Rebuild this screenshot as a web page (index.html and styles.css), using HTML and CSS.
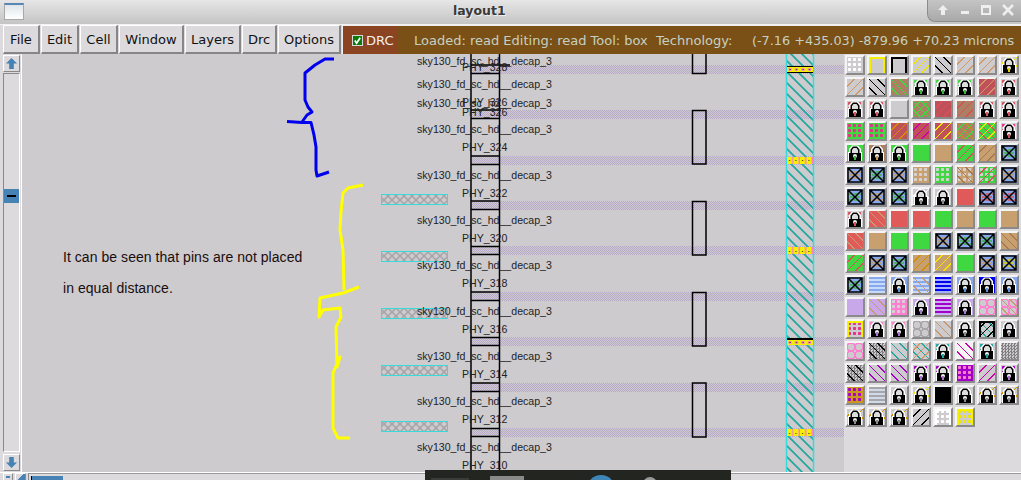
FILE: index.html
```html
<!DOCTYPE html>
<html lang="en">
<head>
<meta charset="utf-8">
<title>layout1</title>
<link rel="stylesheet" href="styles.css">
</head>
<body>
<svg class="defs" width="0" height="0" aria-hidden="true">
  <defs>
    <symbol id="lk" viewBox="0 0 16 16">
      <path d="M1 16V7h1V4l3-3.500h6l3 3.500v3h1v9z" fill="#fff"/>
      <path d="M2 16V8h1.500V4.500L6 1.500h4l2.500 3V8H14v8z" fill="#000"/>
      <path d="M5 8V5l1.500-2h3L11 5v3z" fill="#ddd"/>
      <circle cx="8" cy="11" r="2" fill="#eee"/>
      <rect x="7" y="11" width="2" height="4" fill="currentColor"/>
    </symbol>
    <symbol id="xb" viewBox="0 0 16 16">
      <path d="M1 5h14M1 11h14M3 8h10" stroke="currentColor" stroke-width="1.500" stroke-dasharray="4 2"/>
      <path d="M1 1h14v14H1zM1 1l14 14M15 1L1 15" fill="none" stroke="#000" stroke-width="1.500"/>
    </symbol>
  </defs>
</svg>

<header class="title">
  <span class="win-icon"></span>
  <span class="title-text">layout1</span>
  <div class="win-btns">
    <svg class="wb" viewBox="0 0 12 12"><path d="M6 1l5 5H8v5H4V6H1z"/></svg>
    <svg class="wb" viewBox="0 0 12 12"><path d="M2 7h8v3H2z"/></svg>
    <svg class="wb" viewBox="0 0 12 12"><path d="M1 1h10v10H1zM3 4v5h6V4z" fill-rule="evenodd"/></svg>
    <svg class="wb" viewBox="0 0 12 12"><path d="M1 1l10 10M11 1L1 11" stroke="#eee" stroke-width="2.500"/></svg>
  </div>
</header>

<nav class="menu">
  <button class="mb w-file">File</button>
  <button class="mb w-edit">Edit</button>
  <button class="mb w-cell">Cell</button>
  <button class="mb w-window">Window</button>
  <button class="mb w-layers">Layers</button>
  <button class="mb w-drc">Drc</button>
  <button class="mb w-options">Options</button>
  <div class="drc"><span class="check"><svg viewBox="0 0 10 10"><path d="M2 5l2 3 4-6" fill="none" stroke="#fff" stroke-width="2"/></svg></span>DRC</div>
  <div class="status">
    <span class="st-left">Loaded: read Editing: read Tool: box&nbsp; Technology:</span>
    <span class="st-right">(-7.16 +435.03) -879.96 +70.23 microns</span>
  </div>
</nav>

<main class="main">
  <aside class="vscroll">
    <button class="sb-btn"><svg viewBox="0 0 14 14"><path d="M7 1l6 6H9.500v6h-5V7H1z"/></svg></button>
    <div class="trough">
      <div class="thumb"><span></span></div>
    </div>
    <button class="sb-btn"><svg viewBox="0 0 14 14"><path d="M7 13l6-6H9.500V1h-5v6H1z"/></svg></button>
  </aside>

  <svg class="canvas" viewBox="22 54 822 418" width="822" height="418" xmlns="http://www.w3.org/2000/svg">
    <defs>
      <pattern id="dither" width="2" height="2" patternUnits="userSpaceOnUse">
        <rect width="2" height="2" fill="#cdcbce"/>
        <rect width="1" height="1" fill="#b8a8ca"/>
        <rect x="1" y="1" width="1" height="1" fill="#b8a8ca"/>
      </pattern>
      <pattern id="teal" width="11" height="11" patternUnits="userSpaceOnUse">
        <path d="M-2 -2L13 13M-2 9L2 13M9 -2L13 2" stroke="#22a8a0" stroke-width="1.800"/>
      </pattern>
      <pattern id="mesh" width="8" height="8" patternUnits="userSpaceOnUse">
        <path d="M0 0L8 8M8 0L0 8" stroke="#a5a3a6" stroke-width="1.500"/>
      </pattern>
      <pattern id="cy" x="787" y="66" width="6.500" height="7" patternUnits="userSpaceOnUse">
        <rect width="6.500" height="7" fill="#f4f000"/>
        <path d="M0 .5h6.500M0 6.500h6.500" stroke="#000" stroke-width="1"/>
        <rect x="1.500" y="2" width="3" height="3" fill="#ff80d0"/>
        <rect x="2.500" y="3" width="1" height="1" fill="#111"/>
      </pattern>
      <pattern id="cp" x="787" y="157" width="6.500" height="7" patternUnits="userSpaceOnUse">
        <rect width="6.500" height="7" fill="#f4f000"/>
        <rect x="5" width="1.500" height="7" fill="#ff80d0"/>
        <rect x="2" y="3" width="1" height="1" fill="#222"/>
      </pattern>
    </defs>

    <g class="stripes">
      <rect x="472" y="65" width="372" height="9"/>
      <rect x="472" y="110" width="372" height="9"/>
      <rect x="472" y="156" width="372" height="9"/>
      <rect x="472" y="201" width="372" height="9"/>
      <rect x="472" y="246" width="372" height="9"/>
      <rect x="472" y="292" width="372" height="9"/>
      <rect x="472" y="337" width="372" height="9"/>
      <rect x="472" y="383" width="372" height="9"/>
      <rect x="472" y="428" width="372" height="9"/>
    </g>

    <rect class="rail" x="786.500" y="50" width="27" height="426"/>
    <rect class="cy" x="787" y="66" width="26" height="7"/>
    <rect class="cp" x="787" y="157" width="26" height="7"/>
    <rect class="cp" x="787" y="247" width="26" height="7"/>
    <rect class="cy" x="787" y="338" width="26" height="7"/>
    <rect class="cp" x="787" y="429" width="26" height="7"/>

    <g class="pins">
      <rect x="381.500" y="194.500" width="66" height="10"/>
      <rect x="381.500" y="251.500" width="66" height="10"/>
      <rect x="381.500" y="308.500" width="66" height="10"/>
      <rect x="381.500" y="365.500" width="66" height="10"/>
      <rect x="381.500" y="421.500" width="66" height="10"/>
    </g>

    <g class="bars">
      <path d="M471 50V476M499.500 50V476"/>
      <path d="M471 65H510M471 73.500H499.500M471 110H499.500M471 118.500H499.500M471 156H499.500M471 164.500H499.500M471 201H499.500M471 209.500H499.500M471 246.500H499.500M471 254.500H499.500M471 292H499.500M471 300.500H499.500M471 337.500H499.500M471 345.500H499.500M471 383H499.500M471 391.500H499.500M471 428.500H499.500M471 436.500H499.500"/>
      <path d="M692.500 50V73.500H706V50M692.500 110.500H706V164H692.500ZM692.500 201.500H706V255H692.500ZM692.500 292.500H706V346H692.500ZM692.500 383H706V437H692.500Z"/>
    </g>

    <g class="cell-names">
      <text x="417" y="65">sky130_fd_sc_hd__decap_3</text>
      <text x="417" y="88">sky130_fd_sc_hd__decap_3</text>
      <text x="417" y="107">sky130_fd_sc_hd__decap_3</text>
      <text x="417" y="133">sky130_fd_sc_hd__decap_3</text>
      <text x="417" y="179">sky130_fd_sc_hd__decap_3</text>
      <text x="417" y="224">sky130_fd_sc_hd__decap_3</text>
      <text x="417" y="269">sky130_fd_sc_hd__decap_3</text>
      <text x="417" y="315">sky130_fd_sc_hd__decap_3</text>
      <text x="417" y="360">sky130_fd_sc_hd__decap_3</text>
      <text x="417" y="405">sky130_fd_sc_hd__decap_3</text>
      <text x="417" y="451">sky130_fd_sc_hd__decap_3</text>
      <text x="462" y="71">PHY_328</text>
      <text x="462" y="106">PHY_326</text>
      <text x="462" y="116">PHY_326</text>
      <text x="462" y="151">PHY_324</text>
      <text x="462" y="197">PHY_322</text>
      <text x="462" y="242">PHY_320</text>
      <text x="462" y="287">PHY_318</text>
      <text x="462" y="333">PHY_316</text>
      <text x="462" y="378">PHY_314</text>
      <text x="462" y="423">PHY_312</text>
      <text x="462" y="469">PHY_310</text>
    </g>

    <g class="note">
      <text x="63" y="262">It can be seen that pins are not placed</text>
      <text x="63" y="293">in equal distance.</text>
    </g>

    <path class="ink blue" d="M334 59H325L315 65L305 73V100L308 107L312 112L307 115L302 122M287 121.500L302 122.500H311L314 135L316 147V170L317 176L323 174L329 172"/>
    <path class="ink yellow" d="M363 185L348 188L343 193L341 212L340 230L343 250L344 290M359 287L343 293L320 298L319 317L323 310L340 308L341 317L336 327L337 367L340 357L333 373V428L338 438H350"/>
  </svg>

  <section class="layers">
    <i class="t dot c-w"></i>
    <i class="t box-y"></i>
    <i class="t box-k"></i>
    <i class="t dg a-y"></i>
    <i class="t db b-k"></i>
    <i class="t dg a-t"></i>
    <i class="t dg a-t"></i>
    <i class="t dg a-y ky"><svg><use href="#lk"/></svg></i>

    <i class="t dg a-t"></i>
    <i class="t db b-k"></i>
    <i class="t f-brn db b-g"></i>
    <i class="t dot c-g kg"><svg><use href="#lk"/></svg></i>
    <i class="t dot c-g kg"><svg><use href="#lk"/></svg></i>
    <i class="t dot c-g kg"><svg><use href="#lk"/></svg></i>
    <i class="t f-ros dg a-t"></i>
    <i class="t dot c-r kr"><svg><use href="#lk"/></svg></i>

    <i class="t dot c-r kr"><svg><use href="#lk"/></svg></i>
    <i class="t dot c-r kr"><svg><use href="#lk"/></svg></i>
    <i class="t"></i>
    <i class="t f-brn dg a-g db b-g"></i>
    <i class="t f-ros dg a-r"></i>
    <i class="t f-brn dg a-r"></i>
    <i class="t dot c-r kr"><svg><use href="#lk"/></svg></i>
    <i class="t dot c-r kr"><svg><use href="#lk"/></svg></i>

    <i class="t f-grn dot c-m"></i>
    <i class="t f-grn dot c-m"></i>
    <i class="t f-ros dg a-o"></i>
    <i class="t f-ros dg a-m"></i>
    <i class="t f-ros dg a-y"></i>
    <i class="t f-brn dg a-g db b-o"></i>
    <i class="t f-grn dg a-y db b-r"></i>
    <i class="t dot c-m kr"><svg><use href="#lk"/></svg></i>

    <i class="t f-grn kg"><svg><use href="#lk"/></svg></i>
    <i class="t f-brn kt"><svg><use href="#lk"/></svg></i>
    <i class="t f-grn kg"><svg><use href="#lk"/></svg></i>
    <i class="t f-grn"></i>
    <i class="t f-tan"></i>
    <i class="t f-grn dg a-r"></i>
    <i class="t f-tan dg a-br"></i>
    <i class="t f-blu kg"><svg><use href="#xb"/></svg></i>

    <i class="t f-blu kt"><svg><use href="#xb"/></svg></i>
    <i class="t f-blu kg"><svg><use href="#xb"/></svg></i>
    <i class="t f-blu kt"><svg><use href="#xb"/></svg></i>
    <i class="t f-tan dot c-gy"></i>
    <i class="t f-grn dot c-gy"></i>
    <i class="t f-tan dot c-gy db b-br"></i>
    <i class="t f-grn dot c-gy dg a-r"></i>
    <i class="t f-blu kt"><svg><use href="#xb"/></svg></i>

    <i class="t f-blu kg"><svg><use href="#xb"/></svg></i>
    <i class="t f-blu kt"><svg><use href="#xb"/></svg></i>
    <i class="t f-blu kg"><svg><use href="#xb"/></svg></i>
    <i class="t dg a-w kw"><svg><use href="#lk"/></svg></i>
    <i class="t kw"><svg><use href="#lk"/></svg></i>
    <i class="t f-red"></i>
    <i class="t f-blu kr"><svg><use href="#xb"/></svg></i>
    <i class="t f-blu kr"><svg><use href="#xb"/></svg></i>

    <i class="t dot c-r kr"><svg><use href="#lk"/></svg></i>
    <i class="t f-red db b-t"></i>
    <i class="t f-red"></i>
    <i class="t f-red"></i>
    <i class="t f-grn"></i>
    <i class="t f-tan"></i>
    <i class="t f-grn"></i>
    <i class="t f-tan"></i>

    <i class="t f-red db b-t"></i>
    <i class="t f-tan"></i>
    <i class="t f-grn"></i>
    <i class="t f-grn"></i>
    <i class="t f-blu kt"><svg><use href="#xb"/></svg></i>
    <i class="t f-blu kg"><svg><use href="#xb"/></svg></i>
    <i class="t f-blu kg"><svg><use href="#xb"/></svg></i>
    <i class="t f-tan db b-br"></i>

    <i class="t f-grn dg a-r"></i>
    <i class="t f-blu kt"><svg><use href="#xb"/></svg></i>
    <i class="t f-blu kg"><svg><use href="#xb"/></svg></i>
    <i class="t f-tan dg a-o"></i>
    <i class="t f-tan dg a-y"></i>
    <i class="t f-grn"></i>
    <i class="t f-blu kt"><svg><use href="#xb"/></svg></i>
    <i class="t f-blu ky"><svg><use href="#xb"/></svg></i>

    <i class="t f-blu kg"><svg><use href="#xb"/></svg></i>
    <i class="t f-blu wave"></i>
    <i class="t f-blu kb"><svg><use href="#lk"/></svg></i>
    <i class="t f-blu wave db b-t"></i>
    <i class="t f-deep wave"></i>
    <i class="t f-blu kb"><svg><use href="#lk"/></svg></i>
    <i class="t f-deep kb"><svg><use href="#lk"/></svg></i>
    <i class="t f-blu kb"><svg><use href="#lk"/></svg></i>

    <i class="t f-lil"></i>
    <i class="t f-lil db b-t"></i>
    <i class="t f-pnk dot c-gy"></i>
    <i class="t f-lil kp"><svg><use href="#lk"/></svg></i>
    <i class="t f-pur wave"></i>
    <i class="t f-lil kp"><svg><use href="#lk"/></svg></i>
    <i class="t rings r-p"></i>
    <i class="t rings r-p db b-t"></i>

    <i class="t dot c-m box-y"></i>
    <i class="t dot c-pk kp"><svg><use href="#lk"/></svg></i>
    <i class="t dot c-pk kp"><svg><use href="#lk"/></svg></i>
    <i class="t rings r-g"></i>
    <i class="t db b-t"></i>
    <i class="t kw"><svg><use href="#lk"/></svg></i>
    <i class="t box-k dg a-k db b-teal"></i>
    <i class="t kw"><svg><use href="#lk"/></svg></i>

    <i class="t rings r-p"></i>
    <i class="t dith db b-k"></i>
    <i class="t db b-teal"></i>
    <i class="t db b-teal dg a-t"></i>
    <i class="t dot c-teal kteal"><svg><use href="#lk"/></svg></i>
    <i class="t f-wht db b-m"></i>
    <i class="t dot c-teal kteal"><svg><use href="#lk"/></svg></i>
    <i class="t dith"></i>

    <i class="t dith db b-k"></i>
    <i class="t db b-p"></i>
    <i class="t db b-p"></i>
    <i class="t dot c-p kp"><svg><use href="#lk"/></svg></i>
    <i class="t dot c-p kp"><svg><use href="#lk"/></svg></i>
    <i class="t f-pur dot c-pk"></i>
    <i class="t dg a-m"></i>
    <i class="t dot c-p kp"><svg><use href="#lk"/></svg></i>

    <i class="t f-gold dot c-p"></i>
    <i class="t f-gy2 wave"></i>
    <i class="t kw"><svg><use href="#lk"/></svg></i>
    <i class="t dg a-y kw"><svg><use href="#lk"/></svg></i>
    <i class="t f-blk"></i>
    <i class="t kw"><svg><use href="#lk"/></svg></i>
    <i class="t dg a-o kw"><svg><use href="#lk"/></svg></i>
    <i class="t dg a-o kw"><svg><use href="#lk"/></svg></i>

    <i class="t dg a-o kw"><svg><use href="#lk"/></svg></i>
    <i class="t dg a-o kw"><svg><use href="#lk"/></svg></i>
    <i class="t dg a-o kw"><svg><use href="#lk"/></svg></i>
    <i class="t dg a-k"></i>
    <i class="t dot c-w box-w"></i>
    <i class="t dot c-y box-y"></i>
  </section>
</main>

<footer class="hscroll">
  <span class="hs-btn"></span>
  <span class="hs-btn hs-arrow"></span>
  <div class="hs-trough"><span class="hs-thumb"></span></div>
</footer>

<div class="dock">
  <span class="dock-a"></span>
  <span class="dock-b"></span>
  <span class="dock-globe"></span>
  <span class="dock-c"></span>
</div>
</body>
</html>
```

FILE: styles.css
```css
* { box-sizing: border-box; }
html, body { margin: 0; padding: 0; }
body {
  position: relative;
  width: 1021px;
  height: 480px;
  overflow: hidden;
  background: #dcdadd;
  font-family: "DejaVu Sans", sans-serif;
  font-size: 13px;
  color: #111;
}
.defs { position: absolute; }

/* title bar */
.title {
  position: relative;
  display: flex;
  align-items: center;
  height: 25px;
  background: linear-gradient(#e6e6e6, #c4c4c4);
  border-bottom: 1px solid #f2f2f2;
}
.win-icon {
  width: 20px;
  height: 17px;
  margin: 0 0 2px 4px;
  border: 1px solid #a8a8a8;
  border-top: 2px solid #5a86b4;
  background: linear-gradient(#dfe6ea, #fff);
}
.title-text {
  position: absolute;
  left: 453px;
  top: 3px;
  font-size: 12.500px;
  font-weight: bold;
  color: #3a3a3a;
  text-shadow: 1px 1px 0 #eee;
}
.win-btns {
  margin-left: auto;
  width: 94px;
  height: 22px;
  align-self: flex-start;
  display: flex;
  align-items: center;
  justify-content: space-between;
  padding: 0 7px 2px 9px;
  background: linear-gradient(#c4c4c4, #a9a9a9);
  border-left: 1px solid #8c8c8c;
  border-bottom: 1px solid #8c8c8c;
  border-bottom-left-radius: 8px;
}
.wb { width: 12px; height: 12px; fill: #eee; }

/* menu bar */
.menu {
  display: flex;
  height: 29px;
  padding: 0 0 0 3px;
  background: #dcdadd;
}
.mb {
  height: 29px;
  margin-right: 1px;
  padding: 0;
  border: 1px solid;
  border-width: 1px 2px 2px 1px;
  border-color: #fff #868686 #868686 #fff;
  background: #dcdadd;
  font: 13px "DejaVu Sans", sans-serif;
  color: #111;
  text-align: center;
}
.w-file { width: 37px; }
.w-edit { width: 38px; }
.w-cell { width: 38px; }
.w-window { width: 65px; }
.w-layers { width: 56px; }
.w-drc { width: 35px; }
.w-options { width: 63px; }
.drc {
  display: flex;
  align-items: center;
  width: 56px;
  height: 29px;
  padding-left: 9px;
  gap: 3px;
  background: #8b4422;
  color: #f2f0f0;
  border-left: 1px solid #eee;
  border-top: 1px solid #eee;
}
.check {
  display: block;
  width: 11px;
  height: 11px;
  background: #0a7a0a;
  border: 1px solid #d8d8d8;
}
.check svg { display: block; width: 9px; height: 9px; }
.status {
  flex: 1;
  display: flex;
  align-items: center;
  background: #7a5016;
  color: #c6d0c2;
  padding-left: 16px;
  border-top: 1px solid #eee;
}
.st-left { width: 338px; white-space: nowrap; }
.st-right { white-space: nowrap; font-size: 12.800px; }

/* main row */
.main {
  display: flex;
  height: 418px;
  background: #cdcbce;
}
.vscroll {
  flex: none;
  width: 22px;
  display: flex;
  flex-direction: column;
  gap: 1px;
  padding: 1px 1px 1px 3px;
  background: #dcdadd;
  border-right: 1px solid #fff;
}
.sb-btn {
  flex: none;
  width: 17px;
  height: 17px;
  padding: 1px;
  border: 1px solid;
  border-color: #fff #888 #888 #fff;
  background: #dcdadd;
}
.sb-btn svg { display: block; width: 13px; height: 13px; fill: #4682b4; }
.trough {
  flex: 1;
  margin: 0 0 1px 0;
  padding-top: 115px;
  border: 1px solid;
  border-color: #888 #fff #fff #888;
  background: #dcdadd;
}
.thumb {
  display: flex;
  align-items: center;
  justify-content: center;
  height: 14px;
  background: #4682b4;
}
.thumb span { display: block; width: 9px; height: 2px; background: #000; }
.canvas { flex: none; display: block; background: #cdcbce; }

.stripes rect { fill: url(#dither); }
.rail { fill: url(#teal); stroke: #35dcdc; stroke-width: 1.500; }
.cy { fill: url(#cy); }
.cp { fill: url(#cp); }
.pins rect { fill: url(#mesh); stroke: #35dcdc; stroke-width: 1; }
.bars path { fill: none; stroke: #000; stroke-width: 1.500; }
.cell-names text {
  font-family: "Liberation Sans", Arial, sans-serif;
  font-size: 10.600px;
  fill: #222;
}
.note text {
  font-family: "Liberation Sans", Arial, sans-serif;
  font-size: 14px;
  letter-spacing: .05px;
  fill: #1a0d0d;
}
.ink { fill: none; stroke-width: 3; stroke-linejoin: round; }
.blue { stroke: #0000ee; }
.yellow { stroke: #ffff00; }

/* layer palette */
.layers {
  flex: none;
  width: 177px;
  padding: 1px 0 0 1px;
  background: #dcdadd;
  display: grid;
  grid-template-columns: repeat(8, 20px);
  grid-auto-rows: 20px;
  gap: 2px;
  align-content: start;
}
.t {
  display: block;
  position: relative;
  width: 20px;
  height: 20px;
  border: 2px solid;
  border-color: #f4f4f4 #8a8a8a #8a8a8a #f4f4f4;
  background-color: #cdcbce;
  background-image: var(--pd, none), var(--pb, none), var(--pc, none), var(--pw, none), var(--pr, none);
  color: #888;
}
.t svg { position: absolute; left: 0; top: 0; width: 16px; height: 16px; display: block; }

.f-tan { background-color: #c8a070; }
.f-brn { background-color: #ad7f63; }
.f-grn { background-color: #40d840; }
.f-red { background-color: #e05a5a; }
.f-ros { background-color: #c0505a; }
.f-blu { background-color: #88a8ee; }
.f-lil { background-color: #c8a8e8; }
.f-pnk { background-color: #ff80d0; }
.f-pur { background-color: #a000c8; }
.f-blk { background-color: #000; }
.f-deep { background-color: #0000f0; }
.f-wht { background-color: #f4f4f4; }
.f-gy2 { background-color: #a8a6a9; }
.f-gold { background-color: #c89820; }

.dg { --pd: repeating-linear-gradient(135deg, transparent 0 4.800px, var(--a) 4.800px 6px); }
.db { --pb: repeating-linear-gradient(45deg, transparent 0 4.800px, var(--b) 4.800px 6px); }
.dot { --pc: radial-gradient(circle, var(--c) 0 1.400px, transparent 1.500px); background-size: auto, auto, 5px 5px; }
.wave { --pw: repeating-linear-gradient(transparent 0 2px, rgba(220, 235, 255, .75) 2px 4px); }
.rings { --pr: radial-gradient(circle, transparent 0 3px, var(--r) 3px 4.500px, transparent 4.500px); background-size: auto, auto, auto, auto, 8px 8px; }
.dith { --pc: repeating-conic-gradient(#807e81 0 25%, transparent 0 50%); background-size: auto, auto, 3px 3px; }

.a-y { --a: #f0e800; } .a-k { --a: #000; } .a-t { --a: #cf9a68; } .a-g { --a: #40d840; }
.a-r { --a: #d8505a; } .a-o { --a: #d09000; } .a-m { --a: #d000a8; } .a-p { --a: #a800c8; }
.a-br { --a: #a87850; } .a-w { --a: #fff; }
.b-k { --b: #000; } .b-g { --b: #40d840; } .b-r { --b: #d8505a; } .b-o { --b: #c89020; }
.b-t { --b: #c89a70; } .b-br { --b: #a87850; } .b-teal { --b: #20a8a0; } .b-p { --b: #a800c8; }
.b-m { --b: #d000a8; }
.c-w { --c: #fff; } .c-g { --c: #40d840; } .c-r { --c: #d8505a; } .c-m { --c: #e8308a; }
.c-gy { --c: #d4d2d5; } .c-pk { --c: #ff80d0; } .c-teal { --c: #20a8a0; } .c-p { --c: #a800c8; }
.c-y { --c: #f0e800; }
.r-p { --r: #ff80d0; } .r-g { --r: #a8a6a9; }

.box-y { box-shadow: inset 0 2px 0 #f4f000, inset 2px 0 0 #f4f000, inset -2px 0 0 #f4f000; }
.box-k { box-shadow: inset 0 2px 0 #000, inset 2px 0 0 #000, inset -2px 0 0 #000; }
.box-w { box-shadow: inset 0 2px 0 #fff, inset 2px 0 0 #fff, inset -2px 0 0 #fff; }

.ky { color: #e0d000; } .kg { color: #40b040; } .kr { color: #d8505a; } .kt { color: #c89a60; }
.kb { color: #6090e0; } .kp { color: #b070d0; } .kw { color: #8a888b; } .kteal { color: #20a8a0; }

/* bottom scrollbar */
.hscroll {
  display: flex;
  height: 8px;
  padding-left: 3px;
  gap: 2px;
  background: #dcdadd;
  border-top: 1px solid #fff;
}
.hs-btn {
  flex: none;
  width: 10px;
  height: 8px;
  border: 1px solid;
  border-color: #fff #888 #888 #fff;
  background: #4682b4;
  box-shadow: inset 0 0 0 2px #dcdadd;
}
.hs-arrow { width: 11px; background: linear-gradient(135deg, #dcdadd 50%, #4682b4 50%); box-shadow: none; }
.hs-trough {
  flex: 1;
  padding: 2px 0 0 2px;
  border-top: 1px solid #999;
  border-left: 1px solid #888;
}
.hs-thumb { display: block; width: 32px; height: 6px; background: #4682b4; border-left: 1px solid #000; }

/* dock that overlaps the bottom edge of the shot */
.dock {
  position: absolute;
  left: 425px;
  top: 470px;
  width: 306px;
  height: 10px;
  overflow: hidden;
  background: #232521;
}
.dock span { position: absolute; display: block; }
.dock-a { left: 6px; top: 8px; width: 38px; height: 2px; background: #3a3c3a; }
.dock-b { left: 65px; top: 6px; width: 34px; height: 4px; background: #8a8a8a; }
.dock-globe { left: 162px; top: 5px; width: 28px; height: 28px; border-radius: 50%; background: #3f86b8; }
.dock-c { left: 218px; top: 7px; width: 14px; height: 14px; border-radius: 50%; background: #9a9a9a; }
```
